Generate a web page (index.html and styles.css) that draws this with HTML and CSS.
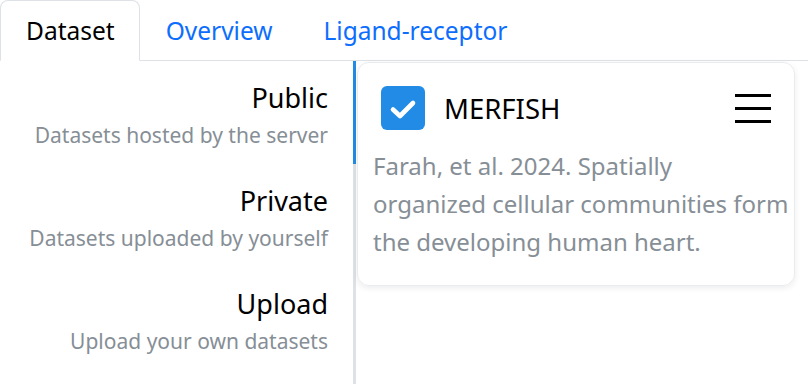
FILE: index.html
```html
<!DOCTYPE html>
<html lang="en">
<head>
    <meta charset="UTF-8">
    <meta name="viewport" content="width=device-width, initial-scale=1.0">
    <title>Dataset</title>
    <link rel="stylesheet" href="styles.css">
</head>
<body>
    <!-- Abas principais -->
    <nav class="tabs">
        <a class="tab tab-active" href="#">Dataset</a>
        <a class="tab" href="#">Overview</a>
        <a class="tab" href="#">Ligand-receptor</a>
    </nav>

    <div class="content">
        <!-- Menu lateral -->
        <aside class="side">
            <div class="side-item side-active">
                <div class="side-title">Public</div>
                <div class="side-sub">Datasets hosted by the server</div>
            </div>
            <div class="side-item">
                <div class="side-title">Private</div>
                <div class="side-sub">Datasets uploaded by yourself</div>
            </div>
            <div class="side-item">
                <div class="side-title">Upload</div>
                <div class="side-sub">Upload your own datasets</div>
            </div>
        </aside>

        <!-- Lista de datasets -->
        <main class="list">
            <div class="card">
                <div class="card-head">
                    <span class="check">
                        <svg width="44" height="44" viewBox="0 0 44 44">
                            <path d="M12 23.5l7 6.5L32 17" fill="none" stroke="#fff" stroke-width="4.6" stroke-linecap="round" stroke-linejoin="round"/>
                        </svg>
                    </span>
                    <span class="card-title">MERFISH</span>
                    <span class="menu">
                        <i></i><i></i><i></i>
                    </span>
                </div>
                <p class="card-desc">Farah, et al. 2024. Spatially<br>organized cellular communities form the developing human heart.</p>
            </div>
        </main>
    </div>
</body>
</html>
```

FILE: styles.css
```css
/* Estilo Global */
body {
    font-family: "Noto Sans", "Open Sans", sans-serif;
    margin: 0;
    padding: 0;
    background-color: #fff;
    color: #212529;
    overflow: hidden;
}

/* Abas */
.tabs {
    display: flex;
    border-bottom: 1px solid #dee2e6;
    height: 60px;
}

.tab {
    display: block;
    padding: 0 24px 0 25px;
    margin-bottom: -1px;
    font-size: 24.5px;
    line-height: 60px;
    color: #0d6efd;
    text-decoration: none;
    border: 1px solid transparent;
    border-radius: 8px 8px 0 0;
}

.tab-active {
    color: #000;
    background: #fff;
    border-color: #dee2e6 #dee2e6 #fff;
}

/* Conteúdo */
.content {
    display: flex;
}

.side {
    width: 353px;
    flex-shrink: 0;
    border-right: 3px solid #dee2e6;
    height: 330px;
}

.side-item {
    text-align: right;
    padding: 19px 25px 0 0;
    height: 84px;
    margin-right: -3px;
    border-right: 3px solid transparent;
}

.side-active {
    border-right-color: #228be6;
}

.side-title {
    font-size: 27px;
    line-height: 36px;
    color: #000;
}

.side-sub {
    padding-top: 1px;
    font-size: 21px;
    line-height: 36px;
    color: #868e96;
}

.list {
    flex: 1;
    padding: 1px 13px 0 1px;
}

/* Cartão */
.card {
    border: 1px solid #e9ecef;
    border-radius: 12px;
    box-shadow: 0 2px 6px rgba(0, 0, 0, 0.08);
    padding: 23px 0 24px 15px;
}

.card-head {
    display: flex;
    align-items: center;
    padding: 0 23px 0 8px;
}

.check {
    width: 44px;
    height: 44px;
    border-radius: 6px;
    background-color: #228be6;
    display: flex;
}

.card-title {
    font-size: 27.5px;
    color: #000;
    margin-left: 19px;
    flex: 1;
}

.menu {
    display: flex;
    flex-direction: column;
    gap: 10px;
    width: 36px;
}

.menu i {
    display: block;
    height: 3px;
    background: #000;
}

.card-desc {
    margin: 17px 0 0;
    max-width: 432px;
    font-size: 24px;
    line-height: 38px;
    color: #868e96;
}
```
